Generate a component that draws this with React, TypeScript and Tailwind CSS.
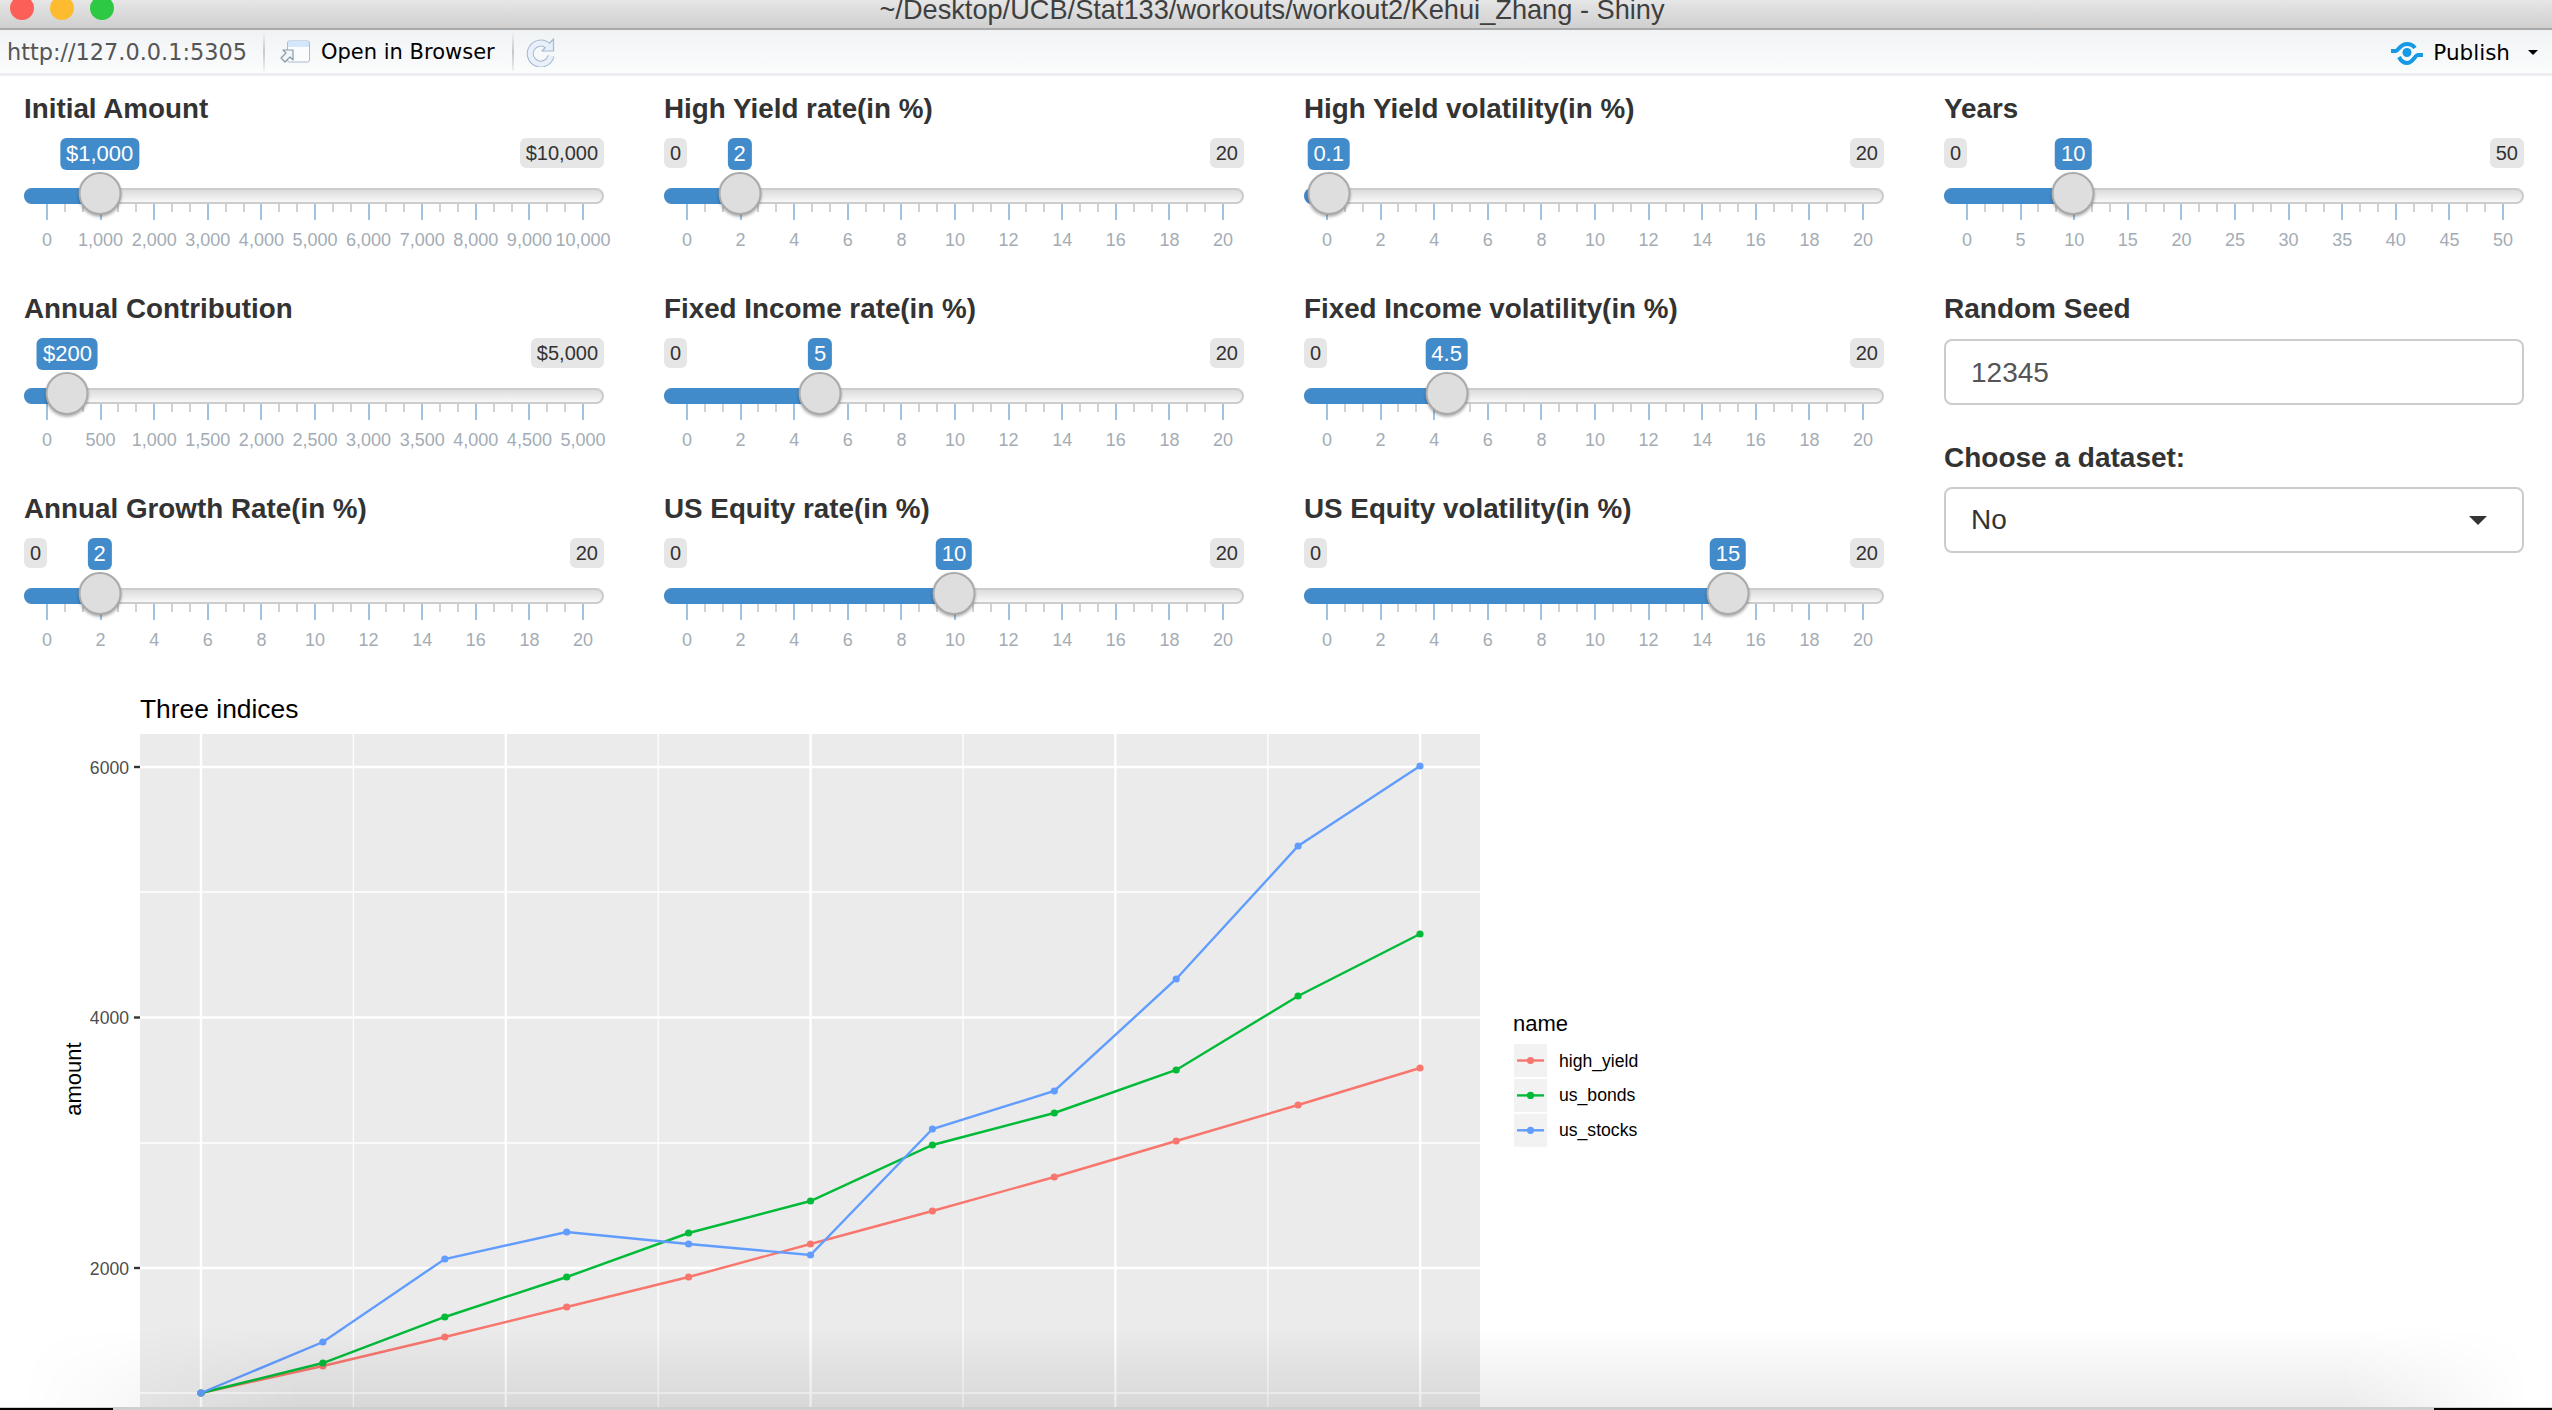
import React from 'react';

interface SliderProps {
    label: string;
    max: number;
    value: number;
    step: number;
    prefix?: boolean;
    hideMin?: boolean;
}

const fmt = (n: number, prefix?: boolean) => `${prefix ? '$' : ''}${n.toLocaleString('en-US')}`;

// tick positions inside the 580px wide slider
const tickX = (f: number) => 23 + 536 * f;

function Slider({ label, max, value, step, prefix, hideMin }: SliderProps) {
    const f = value / max;
    const x = tickX(f) - 1;
    const labels = Array.from({ length: 11 }, (_, i) => i * step);
    const ticks = Array.from({ length: 31 }, (_, i) => i);

    return (
        <div className="h-[200px]">
            <div className="h-10 text-[27.8px] leading-[42px] font-bold text-[#333]">{label}</div>
            <div className="relative h-40 w-[580px]">
                {!hideMin && (
                    <span className="absolute top-[10px] left-0 h-[30px] rounded-md bg-[#e6e6e6] px-1.5 text-[20px] leading-[30px] text-[#333]">
                        {fmt(0, prefix)}
                    </span>
                )}
                <span className="absolute top-[10px] right-0 h-[30px] rounded-md bg-[#e6e6e6] px-1.5 text-[20px] leading-[30px] text-[#333]">
                    {fmt(max, prefix)}
                </span>
                <span
                    className="absolute top-[10px] h-8 -translate-x-1/2 rounded-md bg-[#428bca] px-1.5 text-[22px] leading-8 text-white"
                    style={{ left: x }}
                >
                    {fmt(value, prefix)}
                </span>

                <div className="absolute top-[60px] left-0 h-4 w-full rounded-full border-2 border-[#cccccc] bg-gradient-to-b from-[#dddddd] to-[#f8f8f8]" />
                <div className="absolute top-[60px] left-0 h-4 rounded-l-full bg-[#428bca]" style={{ width: x }} />

                {ticks.map((i) => (
                    <div
                        key={i}
                        className={`absolute top-[76px] w-0.5 ${i % 3 === 0 ? 'h-4 bg-[#9ec3e3]' : 'h-2 bg-[#d2d2d2]'}`}
                        style={{ left: tickX(i / 30) - 1 }}
                    />
                ))}
                {labels.map((n, i) => (
                    <span
                        key={n}
                        className="absolute top-[101px] -translate-x-1/2 text-[18px] leading-[22px] text-[#a3acb5]"
                        style={{ left: tickX(i / 10) }}
                    >
                        {n.toLocaleString('en-US')}
                    </span>
                ))}

                <div
                    className="absolute top-[44px] size-[43px] -translate-x-1/2 rounded-full border-2 border-[#aaaaaa] bg-[#dedede] shadow-[0_2px_3px_rgba(0,0,0,0.3)]"
                    style={{ left: x }}
                />
            </div>
        </div>
    );
}

const PX = (k: number) => 201 + 121.9 * k;

const SERIES = [
    { name: 'high_yield', color: '#F8766D', ys: [1393, 1366, 1337, 1307, 1277, 1244, 1211, 1177, 1141, 1105, 1068] },
    { name: 'us_bonds', color: '#00BA38', ys: [1393, 1363, 1317, 1277, 1233, 1201, 1145, 1113, 1070, 996, 934] },
    { name: 'us_stocks', color: '#619CFF', ys: [1393, 1342, 1259, 1232, 1244, 1255, 1129, 1091, 979, 846, 766] },
];

function Chart() {
    const vMajor = [201, 505.8, 810.6, 1115.4, 1420.2];
    const vMinor = [353.4, 658.2, 963, 1267.8];
    const hMajor = [
        { y: 767, t: '6000' },
        { y: 1017.5, t: '4000' },
        { y: 1268, t: '2000' },
    ];
    const hMinor = [892, 1143, 1393];

    return (
        <svg viewBox="0 688 1760 722" className="block h-[722px] w-[1760px]">
            <text x="140" y="718" fontSize="26.4" fill="#000">
                Three indices
            </text>
            <rect x="140" y="734" width="1340" height="676" fill="#ebebeb" />
            {hMinor.map((y) => (
                <line key={y} x1="140" x2="1480" y1={y} y2={y} stroke="#fff" strokeWidth="1.3" />
            ))}
            {vMinor.map((x) => (
                <line key={x} x1={x} x2={x} y1="734" y2="1410" stroke="#fff" strokeWidth="1.3" />
            ))}
            {hMajor.map(({ y, t }) => (
                <g key={t}>
                    <line x1="140" x2="1480" y1={y} y2={y} stroke="#fff" strokeWidth="2.6" />
                    <line x1="134" x2="140" y1={y} y2={y} stroke="#333" strokeWidth="2.4" />
                    <text x="129" y={y + 6.5} fontSize="17.6" textAnchor="end" fill="#4d4d4d">
                        {t}
                    </text>
                </g>
            ))}
            {vMajor.map((x) => (
                <line key={x} x1={x} x2={x} y1="734" y2="1410" stroke="#fff" strokeWidth="2.4" />
            ))}
            <text x="0" y="0" fontSize="22" textAnchor="middle" fill="#000" transform="translate(81 1079) rotate(-90)">
                amount
            </text>

            {SERIES.map((s) => (
                <g key={s.name}>
                    <polyline
                        points={s.ys.map((y, k) => `${PX(k)},${y}`).join(' ')}
                        fill="none"
                        stroke={s.color}
                        strokeWidth="2.4"
                    />
                    {s.ys.map((y, k) => (
                        <circle key={k} cx={PX(k)} cy={y} r="3.6" fill={s.color} />
                    ))}
                </g>
            ))}

            <text x="1513" y="1031" fontSize="22" fill="#000">
                name
            </text>
            {SERIES.map((s, i) => {
                const top = 1044 + i * 34.9;
                return (
                    <g key={s.name}>
                        <rect x="1514" y={top} width="33" height="33" fill="#f2f2f2" />
                        <line x1="1517" x2="1544" y1={top + 16.5} y2={top + 16.5} stroke={s.color} strokeWidth="2.4" />
                        <circle cx="1530.5" cy={top + 16.5} r="3.6" fill={s.color} />
                        <text x="1559" y={top + 22.5} fontSize="17.6" fill="#000">
                            {s.name}
                        </text>
                    </g>
                );
            })}
        </svg>
    );
}

function OpenIcon() {
    return (
        <svg width="32" height="24" viewBox="0 0 32 24">
            <rect x="8.5" y="1" width="22" height="21" rx="2" fill="#fbfcfe" stroke="#a9bccf" />
            <path d="M9 7V3a2 2 0 0 1 2-2h17a2 2 0 0 1 2 2v4z" fill="#d3e6fb" />
            <path d="M2 18l5-5-3-3h10v10l-3-3-5 5z" fill="#f4f6f9" stroke="#8a98a8" strokeWidth="1.2" strokeLinejoin="round" />
        </svg>
    );
}

function RefreshIcon() {
    return (
        <svg width="30" height="30" viewBox="0 0 30 30">
            <path d="M22 9A10.5 10.5 0 1 0 25 19" fill="none" stroke="#a5b9d1" strokeWidth="7" />
            <path d="M27.5 2v12H16z" fill="#e6eefa" stroke="#a5b9d1" strokeWidth="1.2" strokeLinejoin="round" />
            <path d="M22 9A10.5 10.5 0 1 0 25 19" fill="none" stroke="#e9f0fa" strokeWidth="5" />
        </svg>
    );
}

function PublishIcon() {
    return (
        <svg width="32" height="24" viewBox="0 0 32 24" fill="none" stroke="#169ae6" strokeWidth="4">
            <path d="M0 10H5C7 10 9 3 16 3C19 3 22 4 24 7" />
            <path d="M8 16C10 20 13 22 16 22C22 22 24 14 27 14H32" />
            <circle cx="16" cy="11.5" r="4.5" fill="#169ae6" stroke="none" />
        </svg>
    );
}

function Separator() {
    return <div className="h-[38px] w-0.5 bg-gradient-to-b from-[#eef0f2] via-[#c6c9cc] to-[#eef0f2]" />;
}

export default function App() {
    return (
        <div className="relative h-[1410px] w-full overflow-hidden bg-white font-['Liberation_Sans',Arial,sans-serif]">
            {/* window title */}
            <header className="relative flex h-[30px] justify-center border-b-2 border-[#a9a9a9] bg-gradient-to-b from-[#e6e6e6] to-[#cfcfcf] pr-2">
                <div className="absolute top-[-4px] left-[10px] flex gap-4">
                    <span className="size-6 rounded-full bg-[#fc5f57]" />
                    <span className="size-6 rounded-full bg-[#fdbb2f]" />
                    <span className="size-6 rounded-full bg-[#2dc942]" />
                </div>
                <span className="text-[27.2px] leading-5 text-[#3f3f3f]">
                    ~/Desktop/UCB/Stat133/workouts/workout2/Kehui_Zhang - Shiny
                </span>
            </header>

            {/* toolbar */}
            <div className="flex h-[46px] items-center border-b-[3px] border-[#eceef1] bg-gradient-to-b from-[#f0f3f5] to-[#fbfcfc] font-['DejaVu_Sans',sans-serif] text-[21px]">
                <span className="mt-0.5 ml-[7px] w-[256px] text-[22.4px] text-[#555]">http://127.0.0.1:5305</span>
                <Separator />
                <div className="ml-[14px]">
                    <OpenIcon />
                </div>
                <span className="mt-0.5 ml-[10px] w-[191px] text-black">Open in Browser</span>
                <Separator />
                <div className="ml-[12px]">
                    <RefreshIcon />
                </div>
                <div className="mt-0.5 ml-auto">
                    <PublishIcon />
                </div>
                <span className="mt-1 ml-[10px] text-[21.5px] text-black">Publish</span>
                <span className="mt-0.5 mr-[14px] ml-[18px] size-0 border-x-[5px] border-t-[5px] border-x-transparent border-t-black" />
            </div>

            {/* inputs */}
            <main className="grid grid-cols-[repeat(4,580px)] gap-x-[60px] px-6 pt-3">
                <div>
                    <Slider label="Initial Amount" max={10000} value={1000} step={1000} prefix hideMin />
                    <Slider label="Annual Contribution" max={5000} value={200} step={500} prefix hideMin />
                    <Slider label="Annual Growth Rate(in %)" max={20} value={2} step={2} />
                </div>
                <div>
                    <Slider label="High Yield rate(in %)" max={20} value={2} step={2} />
                    <Slider label="Fixed Income rate(in %)" max={20} value={5} step={2} />
                    <Slider label="US Equity rate(in %)" max={20} value={10} step={2} />
                </div>
                <div>
                    <Slider label="High Yield volatility(in %)" max={20} value={0.1} step={2} hideMin />
                    <Slider label="Fixed Income volatility(in %)" max={20} value={4.5} step={2} />
                    <Slider label="US Equity volatility(in %)" max={20} value={15} step={2} />
                </div>
                <div>
                    <Slider label="Years" max={50} value={10} step={5} />
                    <div className="h-10 text-[28px] leading-[42px] font-bold text-[#333]">Random Seed</div>
                    <div className="mt-[11px] flex h-[66px] items-center rounded-lg border-2 border-[#cccccc] px-[25px] pt-0.5 text-[28px] text-[#555]">
                        12345
                    </div>
                    <div className="mt-[32px] h-10 text-[28px] leading-[42px] font-bold text-[#333]">Choose a dataset:</div>
                    <div className="mt-[10px] flex h-[66px] items-center justify-between rounded-lg border-2 border-[#cccccc] pr-[35px] pl-[25px] text-[28px] text-[#333]">
                        <span>No</span>
                        <span className="size-0 border-x-[9px] border-t-[9px] border-x-transparent border-t-[#333]" />
                    </div>
                </div>
            </main>

            <Chart />

            {/* window shadow and corners at the bottom of the screenshot */}
            <div className="pointer-events-none absolute right-0 bottom-[3px] left-0 h-[80px] bg-gradient-to-b from-transparent to-black/[0.08] [mask-image:linear-gradient(to_right,transparent_20px,black_300px,black_2340px,transparent_2530px)]" />
            <div className="absolute right-0 bottom-0 left-0 h-[3px] bg-[#cfcfcf]" />
            <div className="absolute bottom-0 left-0 h-[2px] w-[113px] bg-black" />
            <div className="absolute right-0 bottom-0 h-[2px] w-[118px] bg-black" />
        </div>
    );
}
